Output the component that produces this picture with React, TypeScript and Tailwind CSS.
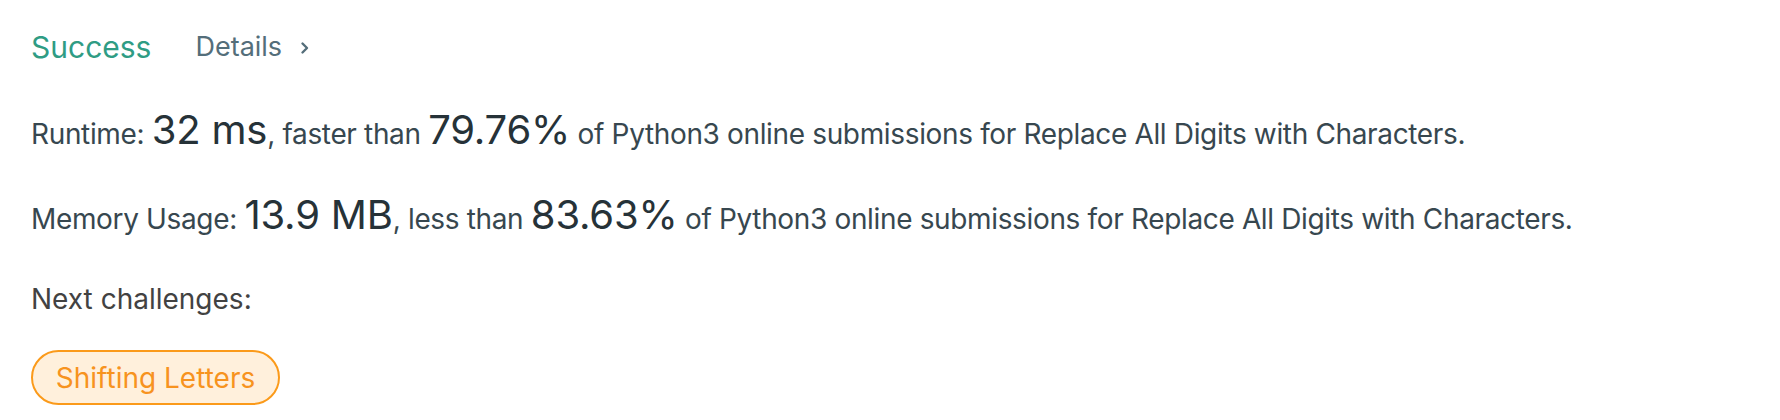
export default function App() {
  return (
    <div className="min-h-[420px] w-full bg-white pl-[31px] pt-[27px] font-['Inter',sans-serif] text-[28px] text-[#37474f]">
      <div className="flex items-center h-[40px]">
        <span className="text-[30px] text-[#2f9c84]">Success</span>
        <span className="ml-[44px] text-[27px] text-[#546e7a]">Details</span>
        <svg className="ml-[18px] mt-[2px]" width="10" height="14" viewBox="0 0 10 14" fill="none">
          <path d="M2.5 2.5 L7 7 L2.5 11.5" stroke="#546e7a" strokeWidth="2.4" strokeLinecap="round" strokeLinejoin="round" />
        </svg>
      </div>

      <p className="mt-[39px] leading-[48px] tracking-[-0.35px]">
        Runtime: <span className="text-[40px] text-[#263238] tracking-[-0.2px]">32 ms</span>, faster than{" "}
        <span className="text-[40px] text-[#263238] tracking-[-0.2px]">79.76%</span> of Python3 online submissions for Replace All Digits with Characters.
      </p>

      <p className="mt-[33px] leading-[48px] tracking-[-0.35px]">
        Memory Usage: <span className="text-[40px] text-[#263238] tracking-[-0.2px]">13.9 MB</span>, less than{" "}
        <span className="text-[40px] text-[#263238] tracking-[-0.2px]">83.63%</span> of Python3 online submissions for Replace All Digits with Characters.
      </p>

      <p className="mt-[36px] leading-[40px] text-[#424242]">Next challenges:</p>

      <div className="mt-[31px] flex">
        <button className="h-[55px] w-[249px] rounded-full border-2 border-[#fb9a1a] bg-[#fff0dc] text-[28px] text-[#f7931e]">
          Shifting Letters
        </button>
      </div>
    </div>
  );
}
